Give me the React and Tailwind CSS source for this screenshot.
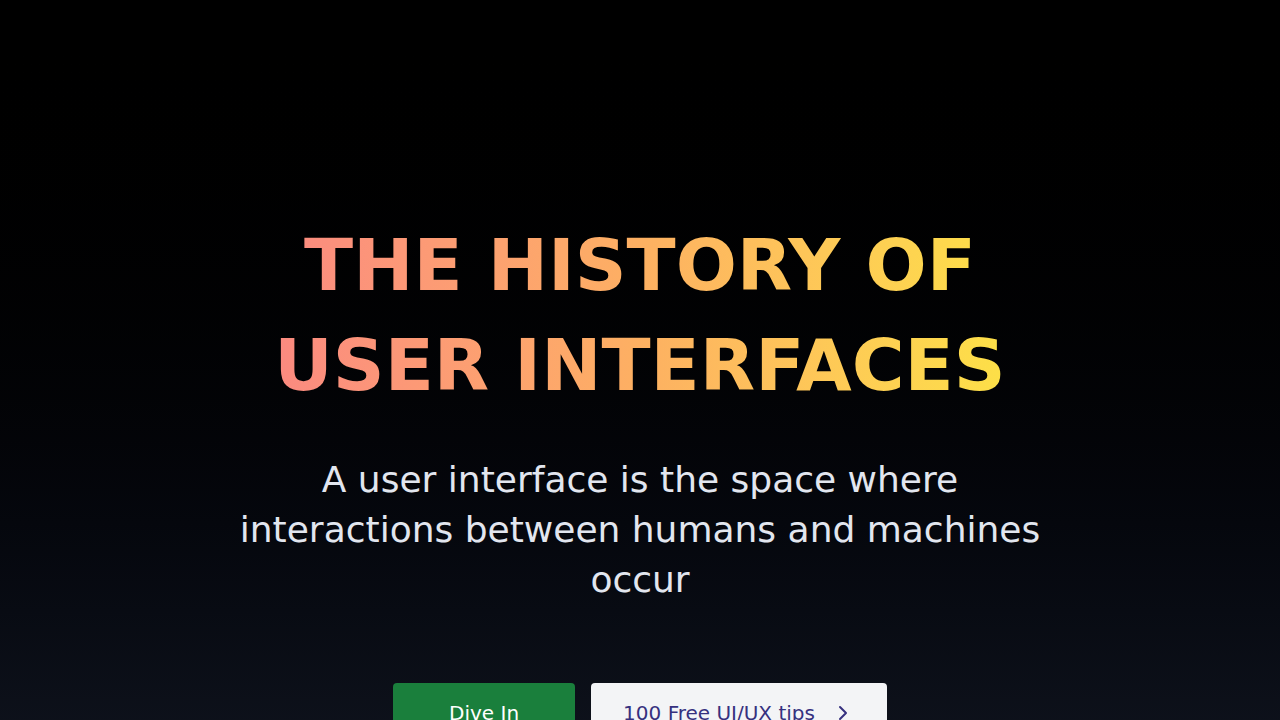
import { ChevronRight } from 'lucide-react';

const App = () => {
  return (
    <div
      className="min-h-screen bg-gradient-to-b from-black to-[#0e121c] overflow-hidden"
      style={{ fontFamily: '"DejaVu Sans", sans-serif' }}
    >
      {/* Hero */}
      <section className="flex flex-col items-center text-center pt-[215px] px-6">
        <h1 className="inline-block text-[72px] font-bold leading-[100px] bg-gradient-to-r from-[#fb8a80] via-[#fdb062] to-[#fde047] bg-clip-text text-transparent">
          THE HISTORY OF
          <br />
          USER INTERFACES
        </h1>

        <p className="mt-[40px] max-w-[830px] text-4xl leading-[50px] text-[#e2e6ef]">
          A user interface is the space where interactions between humans and machines occur
        </p>

        {/* Actions */}
        <div className="mt-[78px] flex items-center gap-4">
          <button className="px-14 py-4 text-xl leading-7 text-white bg-[#1a7f3c] rounded">
            Dive In
          </button>
          <button className="flex items-center px-8 py-4 text-xl leading-7 text-[#36317f] bg-[#f3f4f6] rounded">
            100 Free UI/UX tips
            <ChevronRight className="ml-4" size={24} strokeWidth={2} />
          </button>
        </div>
      </section>
    </div>
  );
};

export default App;
